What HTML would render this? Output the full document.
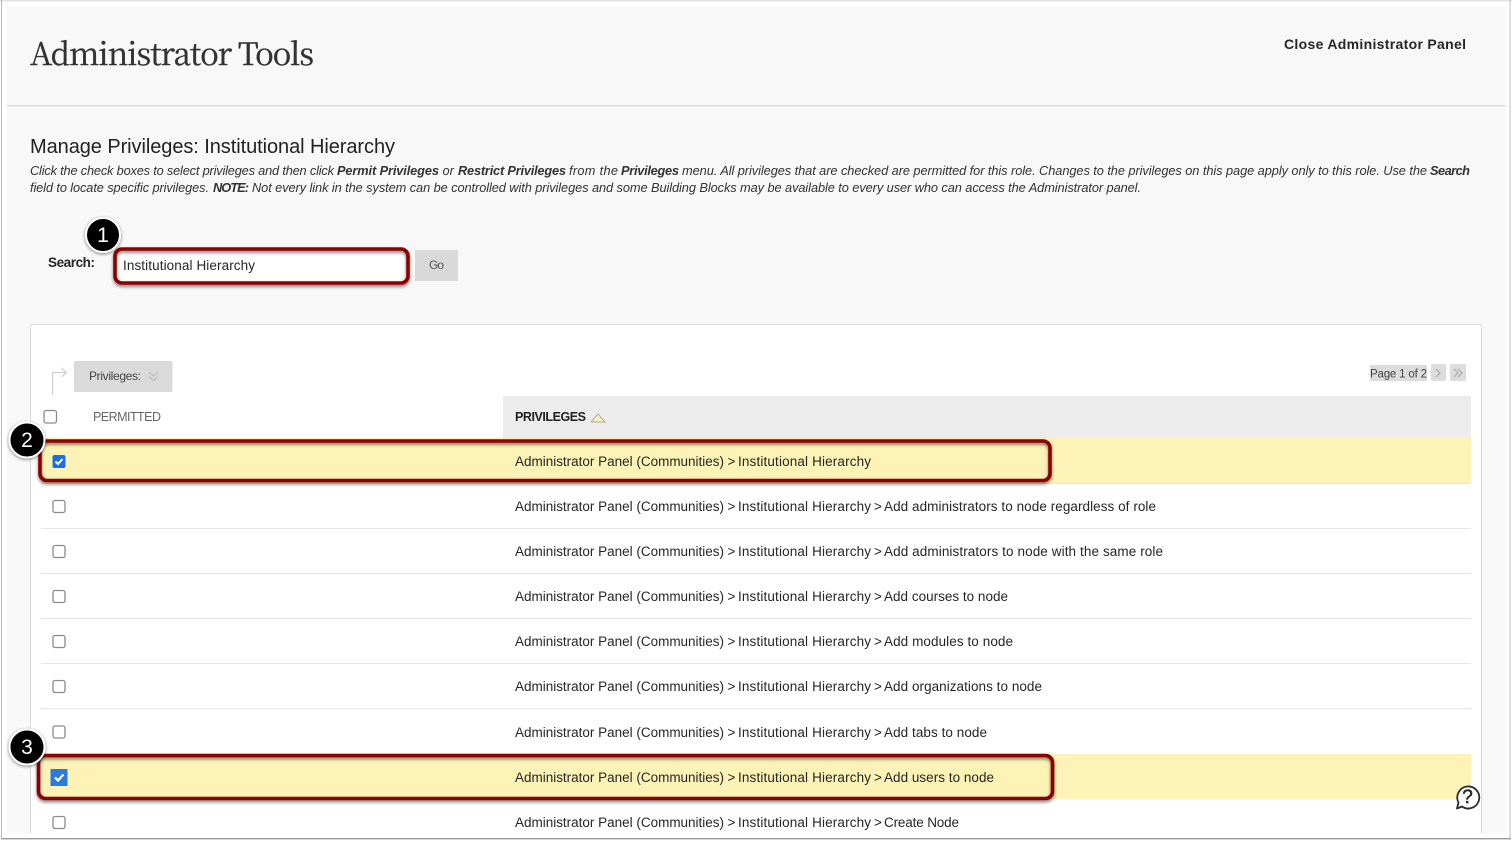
<!DOCTYPE html>
<html><head><meta charset="utf-8"><style>
html,body{margin:0;padding:0;background:#fff;overflow:hidden}
svg{display:block}
text{font-family:"Liberation Sans",sans-serif;fill:#262626;white-space:pre}
.r{font-size:13.5px}
.i{font-size:12.8px;font-style:italic;fill:#333}
.b{font-size:12.8px;font-style:italic;font-weight:bold;fill:#333}
.n{font-size:21px;fill:#fff;text-anchor:middle}
.cb{fill:#fff;stroke:#8a8a8a;stroke-width:1.3}
.ln{stroke:#e6e6e6;stroke-width:1}
.red{fill:none;stroke:#8d0000;stroke-width:3.6}
</style></head><body>
<svg width="1512" height="841" viewBox="0 0 1512 841" xmlns="http://www.w3.org/2000/svg">
<defs>
<filter id="s" x="-5%" y="-30%" width="110%" height="170%"><feDropShadow dx="0" dy="2" stdDeviation="1.6" flood-color="#000" flood-opacity=".5"/></filter>
<filter id="c" x="-30%" y="-30%" width="160%" height="160%"><feDropShadow dx="0" dy="1" stdDeviation="1.5" flood-color="#000" flood-opacity=".5"/></filter>
</defs>
<rect width="1512" height="841" fill="#fff"/>
<rect x="0" y="0" width="1512" height="1.5" fill="#e2e2e2"/>
<rect x="1" y="0" width="1" height="838" fill="#bdbdbd"/>
<rect x="1509.500" y="0" width="1" height="838" fill="#bdbdbd"/>
<rect x="7" y="6" width="1499" height="827" fill="#f8f8f8"/>
<rect x="7" y="105" width="1499" height="1.6" fill="#dfdfdf"/>

<text x="30" y="65" textLength="284" style="font-family:'Noto Serif CJK SC','Liberation Serif',serif;font-size:31px;fill:#333;stroke:#333;stroke-width:.4">Administrator Tools</text>
<text x="1284" y="49" textLength="182" style="font-size:14px;font-weight:bold">Close Administrator Panel</text>
<text x="30" y="153" textLength="365" style="font-size:20px;fill:#222">Manage Privileges: Institutional Hierarchy</text>

<text class="i" x="30" y="175" textLength="304">Click the check boxes to select privileges and then click</text>
<text class="b" x="337" y="175" textLength="102">Permit Privileges</text>
<text class="i" x="442.500" y="175">or</text>
<text class="b" x="458" y="175" textLength="108">Restrict Privileges</text>
<text class="i" x="569" y="175" textLength="49">from the</text>
<text class="b" x="621" y="175" textLength="58">Privileges</text>
<text class="i" x="682" y="175" textLength="745">menu. All privileges that are checked are permitted for this role. Changes to the privileges on this page apply only to this role. Use the</text>
<text class="b" x="1430" y="175" textLength="40">Search</text>
<text class="i" x="30" y="192" textLength="179">field to locate specific privileges.</text>
<text class="b" x="213" y="192" textLength="36">NOTE:</text>
<text class="i" x="252" y="192" textLength="889">Not every link in the system can be controlled with privileges and some Building Blocks may be available to every user who can access the Administrator panel.</text>

<text x="48" y="267" textLength="47" style="font-size:13.5px;font-weight:bold">Search:</text>
<rect x="116" y="250" width="291" height="32" fill="#fff"/>
<text class="r" x="123" y="270" textLength="132">Institutional Hierarchy</text>
<rect x="415" y="250" width="43" height="31" fill="#d9d9d9"/>
<text x="429" y="269" textLength="15" style="font-size:12px;fill:#555">Go</text>

<path d="M30.500 833V324.500H1481.500V833" fill="#fff" stroke="#dcdcdc"/>
<path d="M52.500 395V372.500H66M61.500 368L66.500 372.500 61.500 377" fill="none" stroke="#d0d0d0" stroke-width="1.200"/>
<rect x="74" y="361" width="98.500" height="31" rx="1" fill="#dadada"/>
<text x="89" y="380" textLength="52" style="font-size:12px;fill:#444">Privileges:</text>
<path d="M149 372l4.500 4 4.500-4M149 376.500l4.500 4 4.500-4" fill="none" stroke="#c4c4c4" stroke-width="1.600"/>

<rect x="1370" y="365" width="57" height="16" rx="1" fill="#dcdcdc"/>
<text x="1370" y="377.500" textLength="57" style="font-size:11.500px;fill:#444">Page 1 of 2</text>
<rect x="1431" y="364" width="15" height="17" rx="1" fill="#dcdcdc"/>
<path d="M1436 369l4 4-4 4" fill="none" stroke="#b0b0b0" stroke-width="1.500"/>
<rect x="1450" y="364" width="16" height="17" rx="1" fill="#dcdcdc"/>
<path d="M1454 369l4 4-4 4M1458 369l4 4-4 4" fill="none" stroke="#b0b0b0" stroke-width="1.300"/>

<rect x="503" y="396" width="968" height="42" fill="#ececec"/>
<rect x="44" y="410.500" width="12.500" height="12.500" rx="2" class="cb"/>
<text x="93" y="421" textLength="68" style="font-size:12.500px;fill:#666">PERMITTED</text>
<text x="515" y="421" textLength="71" style="font-size:12.500px;font-weight:bold;fill:#222">PRIVILEGES</text>
<path d="M591 422l7-8 7 8z" fill="#f8f0c8" stroke="#b8b08a" stroke-width="1"/>

<rect x="41" y="438" width="1430" height="45" fill="#fdf3b6"/>
<rect x="41" y="754" width="1430" height="45" fill="#fdf3b6"/>
<path class="ln" d="M41 483.500H1471M41 528.500H1471M41 573.500H1471M41 618.500H1471M41 663.500H1471M41 708.500H1471"/>

<rect x="53" y="500.500" width="12" height="12" rx="2" class="cb"/>
<rect x="53" y="545.500" width="12" height="12" rx="2" class="cb"/>
<rect x="53" y="590.500" width="12" height="12" rx="2" class="cb"/>
<rect x="53" y="635.500" width="12" height="12" rx="2" class="cb"/>
<rect x="53" y="680.500" width="12" height="12" rx="2" class="cb"/>
<rect x="53" y="726" width="12" height="12" rx="2" class="cb"/>
<rect x="53" y="816.500" width="12" height="12" rx="2" class="cb"/>
<rect x="52.500" y="455" width="13" height="13" rx="2" fill="#1a6fe8"/>
<path d="M55.500 461.500l2.500 2.500 4.500-5" fill="none" stroke="#fff" stroke-width="2"/>
<rect x="50.500" y="769" width="17" height="17" fill="#2a7ae2"/>
<path d="M55 777.500l3 3 5.500-6" fill="none" stroke="#fff" stroke-width="2.200"/>

<text class="r" x="515" y="466" textLength="209">Administrator Panel (Communities)</text><text class="r" x="727.500" y="466">&gt;</text><text class="r" x="738" y="466" textLength="133">Institutional Hierarchy</text>

<text class="r" x="515" y="511" textLength="209">Administrator Panel (Communities)</text><text class="r" x="727.500" y="511">&gt;</text><text class="r" x="738" y="511" textLength="133">Institutional Hierarchy</text><text class="r" x="874" y="511">&gt;</text><text class="r" x="884" y="511" textLength="272">Add administrators to node regardless of role</text>

<text class="r" x="515" y="556" textLength="209">Administrator Panel (Communities)</text><text class="r" x="727.500" y="556">&gt;</text><text class="r" x="738" y="556" textLength="133">Institutional Hierarchy</text><text class="r" x="874" y="556">&gt;</text><text class="r" x="884" y="556" textLength="279">Add administrators to node with the same role</text>

<text class="r" x="515" y="601" textLength="209">Administrator Panel (Communities)</text><text class="r" x="727.500" y="601">&gt;</text><text class="r" x="738" y="601" textLength="133">Institutional Hierarchy</text><text class="r" x="874" y="601">&gt;</text><text class="r" x="884" y="601" textLength="124">Add courses to node</text>

<text class="r" x="515" y="646" textLength="209">Administrator Panel (Communities)</text><text class="r" x="727.500" y="646">&gt;</text><text class="r" x="738" y="646" textLength="133">Institutional Hierarchy</text><text class="r" x="874" y="646">&gt;</text><text class="r" x="884" y="646" textLength="129">Add modules to node</text>

<text class="r" x="515" y="691" textLength="209">Administrator Panel (Communities)</text><text class="r" x="727.500" y="691">&gt;</text><text class="r" x="738" y="691" textLength="133">Institutional Hierarchy</text><text class="r" x="874" y="691">&gt;</text><text class="r" x="884" y="691" textLength="158">Add organizations to node</text>

<text class="r" x="515" y="737" textLength="209">Administrator Panel (Communities)</text><text class="r" x="727.500" y="737">&gt;</text><text class="r" x="738" y="737" textLength="133">Institutional Hierarchy</text><text class="r" x="874" y="737">&gt;</text><text class="r" x="884" y="737" textLength="103">Add tabs to node</text>

<text class="r" x="515" y="782" textLength="209">Administrator Panel (Communities)</text><text class="r" x="727.500" y="782">&gt;</text><text class="r" x="738" y="782" textLength="133">Institutional Hierarchy</text><text class="r" x="874" y="782">&gt;</text><text class="r" x="884" y="782" textLength="110">Add users to node</text>

<text class="r" x="515" y="827" textLength="209">Administrator Panel (Communities)</text><text class="r" x="727.500" y="827">&gt;</text><text class="r" x="738" y="827" textLength="133">Institutional Hierarchy</text><text class="r" x="874" y="827">&gt;</text><text class="r" x="884" y="827" textLength="75">Create Node</text>

<rect x="115" y="249" width="293" height="34" rx="7" class="red" filter="url(#s)"/>
<rect x="40" y="441" width="1010" height="39.500" rx="7" class="red" filter="url(#s)"/>
<rect x="38.500" y="755.500" width="1014" height="43" rx="7" class="red" filter="url(#s)"/>

<g filter="url(#c)"><circle cx="103" cy="235" r="17" fill="#000" stroke="#fff" stroke-width="2"/></g>
<text class="n" x="103" y="242">1</text>
<g filter="url(#c)"><circle cx="27" cy="440" r="17.500" fill="#000" stroke="#fff" stroke-width="2"/></g>
<text class="n" x="27" y="447">2</text>
<g filter="url(#c)"><circle cx="27" cy="747" r="17.500" fill="#000" stroke="#fff" stroke-width="2"/></g>
<text class="n" x="27" y="754">3</text>

<path d="M1458.500 802.500A11 11 0 1 1 1462 806.500L1457 808.500Z" fill="#fff" stroke="#2b2b2b" stroke-width="1.800" stroke-linejoin="round"/>
<text x="1467.500" y="803" style="font-size:19px;text-anchor:middle;stroke:#262626;stroke-width:.5">?</text>

<rect x="1" y="838" width="1510" height="1.400" fill="#9b9b9b"/>
</svg>
</body></html>
